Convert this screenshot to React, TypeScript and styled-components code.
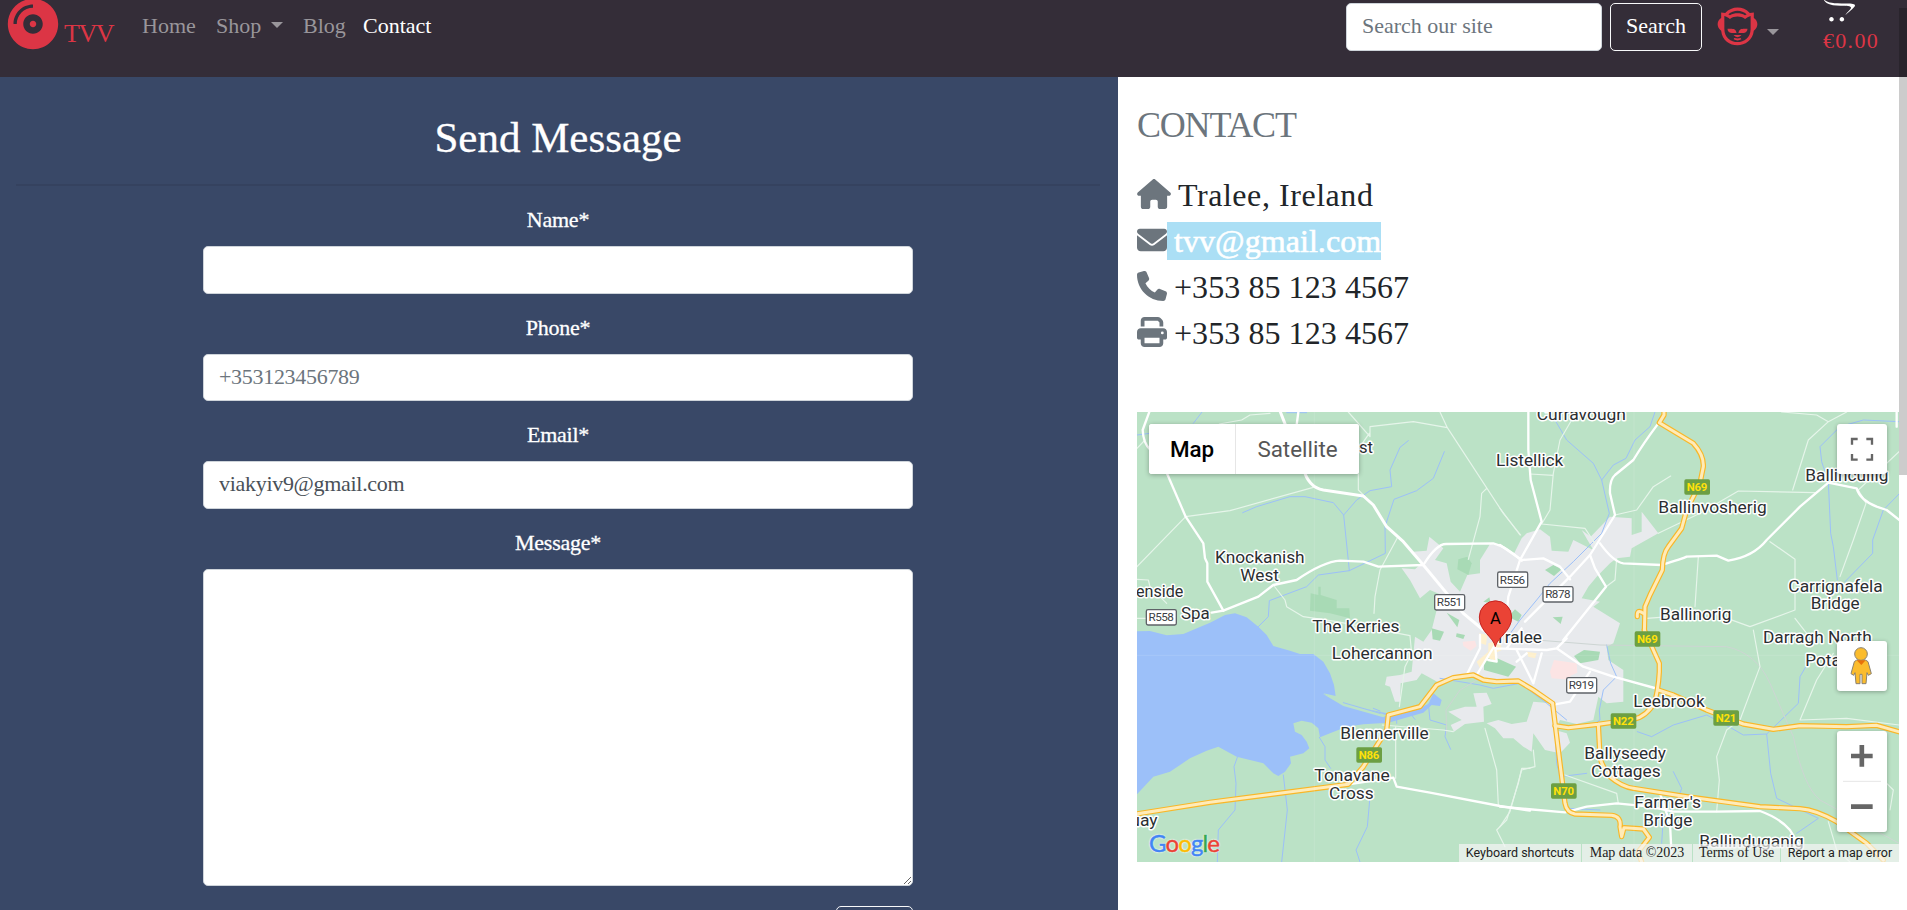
import React from 'react';
import styled, { createGlobalStyle } from 'styled-components';
import { FaCompactDisc, FaNapster, FaOpencart } from 'react-icons/fa';
import { FaHouse, FaEnvelope, FaPhone, FaPrint } from 'react-icons/fa6';

const GlobalStyle = createGlobalStyle`
  * { box-sizing: border-box; }
  body {
    margin: 0;
    height: 910px;
    overflow: hidden;
    background: #fff;
    color: #212529;
    font-family: 'Liberation Serif', serif;
    font-size: 22px;
  }
  input, textarea, button { font: inherit; }
`;

const Page = styled.div`
  height: 910px;
  overflow: hidden;
  position: relative;
`;

/* ---------- navigation ---------- */

const NavBar = styled.nav`
  height: 77px;
  background: #342d38;
  display: flex;
  align-items: flex-start;
  overflow: hidden;
`;

const Brand = styled.a`
  display: flex;
  width: 142px;
  padding-left: 7px;
  color: #dc3545;
  svg { width: 52px; height: 52px; margin-top: -2px; flex: none; }
`;

const BrandName = styled.span`
  margin: 19px 0 0 5px;
  font-size: 26px;
  line-height: 30px;
  letter-spacing: -1.5px;
`;

const NavLink = styled.a<{ $width: number; $active?: boolean }>`
  width: ${(p) => p.$width}px;
  color: ${(p) => (p.$active ? '#fff' : '#99969b')};
  line-height: 24px;
  margin-top: 14px;
  white-space: nowrap;
`;

const Caret = styled.span`
  display: block;
  width: 12px;
  height: 6px;
  border: 6px solid transparent;
  border-top-color: #99969b;
  border-bottom: 0;
  flex: none;
`;

const CaretLink = styled.a`
  width: 32px;
  padding-top: 22px;
`;

const SearchForm = styled.form`
  display: flex;
  gap: 8px;
  margin: 3px 0 0 auto;
`;

const SearchInput = styled.input`
  width: 256px;
  height: 48px;
  border: 1px solid #ced4da;
  border-radius: 5px;
  padding: 0 15px 2px;
  &::placeholder { color: #6c757d; opacity: 1; }
`;

const SearchButton = styled.button`
  width: 92px;
  height: 48px;
  padding: 0 0 2px;
  border: 1px solid #f8f9fa;
  border-radius: 5px;
  background: transparent;
  color: #fff;
`;

const Profile = styled.a`
  display: flex;
  width: 121px;
  padding: 5px 0 0 15px;
  color: #dc3545;
  svg { width: 41px; height: 41px; flex: none; }
  ${Caret} { margin: 24px 0 0 9px; }
`;

const Cart = styled.a`
  width: 84px;
  display: flex;
  flex-direction: column;
  color: #fff;
  svg { width: 32px; height: 26px; margin: -3px 0 7px; display: block; }
`;

const CartTotal = styled.span`
  color: #dc3545;
  line-height: 22px;
  letter-spacing: 1.3px;
`;

/* ---------- message form ---------- */

const Columns = styled.main`
  display: flex;
  height: 833px;
`;

const MessagePanel = styled.section`
  width: 1118px;
  padding: 32px 18px 0 16px;
  background: #394867;
  color: #fff;
`;

const Title = styled.h2`
  margin: 0;
  font-size: 43px;
  font-weight: 400;
  line-height: 58px;
  text-align: center;
  -webkit-text-stroke: 0.3px #fff;
`;

const Rule = styled.hr`
  margin: 17px 0 21px;
  border: 0;
  border-top: 2px solid #35425f;
`;

const Fields = styled.form`
  width: 710px;
  margin-left: 187px;
  display: flex;
  flex-direction: column;
`;

const Label = styled.label`
  height: 39px;
  line-height: 25px;
  text-align: center;
  letter-spacing: -0.25px;
  -webkit-text-stroke: 0.3px #fff;
`;

const Input = styled.input`
  height: 47.7px;
  margin-bottom: 21px;
  border: 1px solid #ced4da;
  border-radius: 5px;
  padding: 0 15px 2px;
  color: #495057;
  background: #fff;
  letter-spacing: -0.3px;
  &::placeholder { color: #6c757d; opacity: 1; }
`;

const TextArea = styled.textarea`
  height: 317px;
  border: 1px solid #ced4da;
  border-radius: 5px;
  resize: vertical;
  background: #fff;
`;

const SendButton = styled.button`
  align-self: flex-end;
  width: 77px;
  height: 48px;
  margin-top: 20px;
  border: 1px solid #f8f9fa;
  border-radius: 5px;
  background: transparent;
  color: #fff;
`;

/* ---------- contact details ---------- */

const ContactPanel = styled.section`
  flex: 1;
  padding: 27px 8px 0 19px;
  background: #fff;
`;

const ContactHeading = styled.h3`
  margin: 0 0 29px;
  color: #6c757d;
  font-size: 36px;
  font-weight: 400;
  line-height: 43px;
  letter-spacing: -1.2px;
`;

const ContactList = styled.ul`
  list-style: none;
  margin: 0 0 52px;
  padding: 0;
`;

const ContactItem = styled.li`
  display: flex;
  align-items: center;
  height: 46px;
  font-size: 32px;
  line-height: 38px;
  svg { height: 30px; width: 30px; color: #6c757d; flex: none; margin-bottom: 10px; }
  &:first-child svg { width: 34px; }
`;

const ContactText = styled.span<{ $selected?: boolean; $spacing?: number }>`
  height: 38px;
  margin-bottom: 8px;
  padding-left: 7px;
  letter-spacing: ${(p) => p.$spacing ?? 0.07}px;
  color: ${(p) => (p.$selected ? '#fff' : '#212529')};
  background: ${(p) => (p.$selected ? '#abdff5' : 'transparent')};
  -webkit-text-stroke: ${(p) => (p.$selected ? '0.6px #fff' : '0')};
`;

/* ---------- map ---------- */

const MapFrame = styled.div`
  position: relative;
  width: 762px;
  height: 450px;
  overflow: hidden;
  background: #bbe2c6;
  font-family: Roboto, sans-serif;
`;

const MapCanvas = styled.svg`
  display: block;
`;

const MapTypes = styled.div`
  position: absolute;
  left: 12px;
  top: 12px;
  display: flex;
  height: 50px;
  border-radius: 3px;
  background: #fff;
  box-shadow: 0 1px 5px rgba(0, 0, 0, 0.3);
  overflow: hidden;
`;

const MapType = styled.button<{ $width: number; $active?: boolean }>`
  width: ${(p) => p.$width}px;
  padding: 0 0 1px;
  border: 0;
  background: #fff;
  font-size: 22.4px;
  font-weight: ${(p) => (p.$active ? 500 : 400)};
  color: ${(p) => (p.$active ? '#000' : '#565656')};
  & + & { border-left: 1px solid #e6e6e6; }
`;

const MapControl = styled.button<{ $top: number; $height?: number }>`
  position: absolute;
  right: 12px;
  top: ${(p) => p.$top}px;
  width: 50px;
  height: ${(p) => p.$height ?? 50}px;
  padding: 0;
  border: 0;
  border-radius: 3px;
  background: #fff;
  box-shadow: 0 1px 4px rgba(0, 0, 0, 0.3);
  svg { display: block; }
`;

const GoogleMark = styled.div`
  position: absolute;
  left: 12px;
  bottom: 3px;
  font-family: Lato, sans-serif;
  font-size: 24px;
  line-height: 32px;
  letter-spacing: -0.9px;
  -webkit-text-stroke: 0.5px currentColor;
  text-shadow: 0 0 2px #fff, 0 0 2px #fff;
`;

const Letter = styled.span<{ $color: string }>`
  color: ${(p) => p.$color};
`;

const Attribution = styled.div`
  position: absolute;
  right: 0;
  bottom: 0;
  display: flex;
  gap: 1px;
  height: 18px;
  line-height: 17px;
  color: #222;
`;

const Credit = styled.span<{ $width: number; $serif?: boolean }>`
  width: ${(p) => p.$width}px;
  text-align: center;
  white-space: nowrap;
  background: rgba(245, 245, 245, 0.7);
  font-family: ${(p) => (p.$serif ? "'Liberation Serif', serif" : 'Roboto, sans-serif')};
  font-size: ${(p) => (p.$serif ? 14 : 12.5)}px;
`;

const ScrollThumb = styled.div`
  position: absolute;
  right: 0;
  top: 8px;
  width: 8px;
  height: 467px;
  background: rgba(0, 0, 0, 0.2);
`;

/* Map geometry is stored per tile; each tile has its own origin in the 2286x1350 canvas. */
const origins = {
  nw: [-21, -36],
  ne: [1089, -36],
  sw: [-21, 654],
  se: [1089, 654],
  town: [729, 324],
} as const;

type Tile = keyof typeof origins;
type Shape = [Tile, string];

const place = (tile: Tile) => `translate(${origins[tile][0]} ${origins[tile][1]})`;

const water: Shape[] = [
  ['sw', 'M0 4L60 3L110 16L160 12L240-22L285-45L315-50L350-38L385-10L410 15L430 48L480 62L510 72L550 72L580 95L600 130L612 165L617 198L580 190L640 225L700 235L770 250L860 238L895 222L910 190L935 210L930 228L905 225L880 248L775 278L700 283L650 290L600 310L570 322L565 295L545 278L515 272L490 280L495 305L515 315L530 335L538 355L520 370L480 380L483 400L465 425L445 438L430 430L400 400L360 390L320 380L265 350L230 362L180 385L120 425L70 440L0 515Z'],
];

const spit: Shape[] = [['sw', 'M578 191L640 214L770 256L760 262L640 228Z']];

const urban: Shape[] = [
  ['town', 'M65 145L105 148L125 130L100 95L140 92L148 50L190 85L165 120L200 130L212 185L240 215L262 165L300 160L300 120L330 72L375 80L400 105L425 55L440 40L480 28L510 50L515 92L565 95L580 60L640 90L605 30L632 50L690-10L755-5L755 45L785 35L785-25L835 40L755 85L750 110L710 115L690 130L650 170L625 200L605 235L660 245L640 260L720 310L700 370L680 380L685 420L730 450L730 545L680 550L655 530L640 600L590 612L540 600L525 630L560 640L570 668L540 700L495 690L460 640L455 695L430 680L400 655L370 655L345 625L320 610L355 600L395 612L440 605L445 590L460 545L515 550L460 500L415 480L345 485L250 465L180 490L125 460L110 480L62 490L60 545L45 545L30 500L15 495L20 470L60 465L95 455L105 350L130 365L155 330L170 270L200 232L150 210L120 235L90 180Z'],
  ['town', 'M205 575L255 560L290 560L280 520L320 518L335 552L310 560L312 605L255 612L222 635L212 615L245 600Z'],
];

const parks: Shape[] = [
  ['town', 'M235 118L262 110L275 130L265 165L232 148Z'],
  ['town', 'M495 150L520 135L545 148L522 168Z'],
  ['town', 'M385 290L405 268L425 285L415 305Z'],
  ['town', 'M310 245L328 232L332 250Z'],
  ['town', 'M518 292L548 290L542 312Z'],
  ['town', 'M155 325L192 335L180 362L158 358Z'],
  ['town', 'M200 278L238 300L232 322Z'],
  ['town', 'M230 340L255 345L250 357L228 350Z'],
  ['town', 'M312 415L345 412L408 440L385 470L312 450Z'],
  ['town', 'M582 408L612 390L660 395L655 420L600 430Z'],
  ['nw', 'M542 580L565 585L565 560L572 560L572 585L620 600L620 625L658 625L660 655L600 640L540 632Z'],
];

const commercial: Shape[] = [
  ['town', 'M325 370L360 360L365 390L345 400L350 425L325 415L300 445L290 425L325 395Z'],
  ['town', 'M298 340L322 345L318 375L298 368Z'],
  ['town', 'M440 395L470 400L465 415L445 410Z'],
];

const medical: Shape[] = [
  ['town', 'M510 455L522 420L590 430L592 458L570 468L580 480L515 475Z'],
  ['town', 'M248 365L285 362L290 378L272 392L250 378Z'],
];

const streams: Shape[] = [
  ['nw', 'M338 338L380 320L480 290L525 290L610 308L641 345L658 512L565 525L530 560L418 602L415 650L385 680'],
  ['nw', 'M835 122L810 142L780 210L785 260L720 272L680 300L641 345'],
  ['nw', 'M943 155L910 235L860 272L792 298L765 380L766 460L658 512'],
  ['nw', 'M216 36L190 70M21 105L60 100M470 38L530 38'],
  ['ne', 'M465 36L450 80L405 120L378 175L340 195L305 240L328 340L305 400L275 430L220 485L150 550L110 600L60 660L20 715'],
  ['ne', 'M165 60L200 120L280 190L305 240'],
  ['ne', 'M1197 65L1090 60L1020 80L960 140L965 185L985 245L992 400L1000 440L1012 540'],
  ['ne', 'M1197 282L1150 330L1118 420L1118 460L1035 545'],
  ['town', 'M680 375L692 430L710 470L670 510L658 570L660 600L630 620'],
  ['se', 'M412 305L455 320L520 285L620 255L690 292L730 315L800 312L812 430L830 505L955 565L890 610'],
  ['se', 'M800 312L895 220L900 140L935 80'],
  ['se', 'M165 290L170 400L180 440L260 430M520 425L545 475L530 520L490 560L485 640M200 535L300 540'],
  ['sw', 'M322 382L312 410L318 460L315 540L265 600L262 696M460 435L472 540L455 696M568 322L585 350L585 390L602 415M720 500L712 590L678 660L690 696'],
  ['sw', 'M895 222L900 270L950 285L945 320L962 358M800 280L800 255M840 250L855 268M640 218L750 250M730 235L750 243'],
  ['town', 'M180 475L300 495L340 505L420 490L500 550L560 600'],
];

const railways: Shape[] = [
  ['town', 'M200 640L198 570L240 510L290 480'],
  ['se', 'M110 30L300 45L680 50Q770 70 810 160L880 320Q910 470 960 510L1197 640'],
];

const lanes: Shape[] = [
  ['nw', 'M167 350L300 332L550 262M167 350L21 500M21 145L45 120M268 72L335 60L360 45L420 40M655 36L720 110L720 80L850 65L952 83M930 36L952 83L1120 340L1172 405M718 100L690 140M685 195L685 270L705 290M1070 265L1055 280L1050 350L1015 478M803 412L750 510L735 590L732 640M430 555L465 600L470 620L520 650L620 665L840 707M21 655L110 655M21 538L55 540L60 560L110 610'],
  ['ne', 'M215 60L180 120L160 220L150 330L125 372L255 385L285 430M90 222L160 226M345 345L410 330L460 260L512 228M475 400L600 340L715 273L945 278M878 270L925 120L985 65L950 45L845 36M1197 155L1075 270L1098 310L1060 420L1020 530M810 425L885 478L885 630L750 680L640 640L440 655M595 470L585 620M350 475L345 540L318 560M0 325L60 405M1040 36L985 65M885 655L920 700'],
  ['se', 'M760 0L780 110L720 270L680 300L650 380L658 450L650 545M1000 70L950 150L900 270L1040 265L1197 285M195 435L350 490L355 520M100 360L105 410L65 420L30 545L0 590M1160 460L1180 480L1170 540M985 575L1010 660L1050 696'],
  ['sw', 'M840 18L845 70L825 110L808 230M797 445L797 290M757 285L940 300L970 305M1065 295L1100 420L1105 525M1200 415L1175 415L1165 460L1130 570L1100 600L1125 650'],
];

const roads: Shape[] = [
  ['nw', 'M60 30L38 90Q40 130 60 148M100 195L167 350L220 430L225 475L232 490L232 545L280 632'],
  ['nw', 'M245 638L280 632L385 590L430 555L500 540Q580 485 630 482L700 485L745 500L880 495Q920 430 950 432L1090 430Q1130 440 1175 482'],
  ['nw', 'M505 36L500 75'],
  ['ne', 'M85 36L85 150L92 240L125 365L60 480L25 590L20 640'],
  ['ne', 'M475 70Q430 130 400 180L345 225Q328 240 330 280L345 345L270 465L210 530L75 665'],
  ['ne', 'M300 430Q340 485 370 490L485 495Q550 475 560 470L650 467L685 482Q760 470 800 420L900 320L985 248L1070 265Q1080 300 1130 320L1160 330L1200 362'],
  ['ne', 'M0 435L65 480L130 475L180 500L210 538M270 465L285 505L318 560L190 720M1190 30L1190 80'],
  ['town', 'M260 465L300 385L300 345M290 465L345 375L350 425L325 420M345 385L500 390L530 385L610 440L700 470L835 507M410 390L460 490L485 400M380 385L425 325M530 385L560 355M630 455L570 545L525 553M440 400L410 425'],
  ['sw', 'M655 463L790 443L800 470L900 488L1110 528L1200 542'],
  ['se', 'M0 530L195 547L260 530L350 520L450 530L520 545L650 545L780 543Q840 565 870 600L900 650M480 490L510 580L515 680'],
];

const trunk: Shape = ['nw', 'M448 28L480 110L520 205Q535 262 580 270L700 288L730 315L770 380L820 425L880 495L1000 640L1060 690'];

const highways: Shape[] = [
  ['ne', 'M492 20L492 45L478 68L580 130Q612 165 610 200L600 250L560 330L545 385L505 440Q488 460 487 510L450 585L435 620L433 700M430 640Q410 625 412 650'],
  ['se', 'M433 0L478 100Q480 150 465 215Q440 260 400 268L295 283L205 293L165 287'],
  ['se', 'M475 180L520 195L620 240L730 282L820 298L900 287L1040 290L1130 286L1200 306'],
  ['sw', 'M0 555L240 517L655 463L700 410L770 300L775 255L870 230L920 165L970 143L1030 135L1060 150L1100 155L1165 153L1210 180L1268 220'],
  ['se', 'M158 222L180 400L195 520Q200 548 225 552L335 556Q365 560 360 590L365 620L372 593L430 597L448 622L415 665L425 696'],
  ['se', 'M295 283L300 380Q305 410 330 440Q365 470 400 475L560 500L780 530L900 536Q950 540 1010 575L1100 640L1150 690'],
];

interface LayerProps {
  shapes: Shape[];
  fill?: string;
  stroke?: string;
  width?: number;
}

const Layer = ({ shapes, fill = 'none', stroke = 'none', width = 0 }: LayerProps) => (
  <g fill={fill} stroke={stroke} strokeWidth={width} strokeLinejoin="round" strokeLinecap="round">
    {shapes.map(([tile, d]) => (
      <path key={tile + d} transform={place(tile)} d={d} />
    ))}
  </g>
);

/* text, tile, left, baseline, width */
const places: [string, Tile, number, number, number][] = [
  ['Curravough', 'ne', 110, 59, 268],
  ['st', 'nw', 687, 158, 42],
  ['Listellick', 'ne', -12, 199, 202],
  ['Ballincuilig', 'ne', 916, 243, 249],
  ['Ballinvosherig', 'ne', 475, 338, 325],
  ['Knockanish', 'nw', 255, 489, 269],
  ['West', 'nw', 331, 542, 116],
  ['enside', 'nw', 18, 591, 142],
  ['Spa', 'nw', 153, 656, 86],
  ['The Kerries', 'nw', 547, 696, 261],
  ['Lohercannon', 'sw', 605, 87, 303],
  ['Carrignafela', 'ne', 865, 575, 283],
  ['Bridge', 'ne', 932, 628, 147],
  ['Ballinorig', 'ne', 480, 660, 214],
  ['Darragh North', 'se', 789, 38, 326],
  ['Potaley', 'se', 916, 107, 170],
  ['Tralee', 'se', -15, 38, 141],
  ['Leebrook', 'se', 400, 231, 214],
  ['Blennerville', 'sw', 631, 327, 265],
  ['Tonavane', 'sw', 553, 454, 226],
  ['Cross', 'sw', 597, 507, 134],
  ['Ballyseedy', 'se', 253, 388, 245],
  ['Cottages', 'se', 273, 441, 209],
  ["Farmer's", 'se', 403, 535, 200],
  ['Bridge', 'se', 430, 588, 147],
  ['Ballinduganig', 'se', 598, 652, 313],
  ['uay', 'sw', 1, 589, 82],
];

/* text, tile, left, top */
const shields: [string, Tile, number, number][] = [
  ['R558', 'nw', 48, 628],
  ['R551', 'nw', 913, 583],
  ['R556', 'nw', 1102, 515],
  ['R878', 'ne', 128, 559],
  ['R919', 'se', 199, 142],
  ['N69', 'ne', 552, 237],
  ['N69', 'se', 403, 3],
  ['N22', 'se', 331, 249],
  ['N21', 'se', 639, 240],
  ['N70', 'se', 152, 459],
  ['N86', 'sw', 678, 351],
];

const Shield = ({ code, tile, x, y }: { code: string; tile: Tile; x: number; y: number }) => {
  const national = code.startsWith('N');
  const w = national ? 78 : 91;
  return (
    <g transform={place(tile)}>
      <rect
        x={x + 1} y={y + 1} width={w - 1} height={46} rx={5}
        fill={national ? '#6c9f43' : '#fff'}
        stroke={national ? 'none' : '#5f6368'} strokeWidth={4}
      />
      <text
        x={x + w / 2} y={y + 36} textAnchor="middle"
        fontSize={national ? 34 : 35}
        fontWeight={national ? 700 : 400}
        textLength={national ? 62 : 76}
        fill={national ? '#ffe10a' : '#3c4043'}
      >
        {code}
      </text>
    </g>
  );
};

const TownMap = () => (
  <MapCanvas width="762" height="450" viewBox="0 0 2286 1350" fontFamily="Roboto, sans-serif">
    <rect width="2286" height="1350" fill="#bbe2c6" />
    <Layer shapes={water} fill="#9cc0f9" />
    <Layer shapes={spit} fill="#bbe2c6" />
    <Layer shapes={urban} fill="#e8eaed" />
    <Layer shapes={parks} fill="#a8dab5" />
    <Layer shapes={medical} fill="#fce4e4" />
    <Layer shapes={commercial} fill="#fef0cd" />
    <Layer shapes={streams} stroke="#9cc0f9" width={3} />
    <Layer shapes={railways} stroke="#cdd5d3" width={3} />
    <Layer shapes={lanes} stroke="#e6f5ea" width={3.5} />
    <Layer shapes={roads} stroke="#fff" width={7} />
    <Layer shapes={[trunk]} stroke="#fff" width={9} />
    <Layer shapes={highways} stroke="#f9b728" width={16} />
    <Layer shapes={highways} stroke="#ffebb8" width={9} />
    <path d="M532 0V1350M1491 0V1350M0 730H2286" stroke="#fff" strokeOpacity="0.12" strokeWidth="3" />
    {shields.map(([code, tile, x, y]) => (
      <Shield key={code + tile} code={code} tile={tile} x={x} y={y} />
    ))}
    <g fontSize="51.5" fill="#2b2e31" stroke="#fff" strokeWidth="9" strokeLinejoin="round">
      {places.map(([name, tile, x, y, length]) => (
        <text key={name + tile} transform={place(tile)} x={x} y={y} textLength={length} lengthAdjust="spacingAndGlyphs" paintOrder="stroke">
          {name}
        </text>
      ))}
    </g>
    <g transform={place('town')}>
      <path
        d="M346 380C340 350 298 335 298 291A48 48 0 0 1 395 291C395 335 352 350 346 380Z"
        fill="#ea4335" stroke="#c5221f" strokeWidth="3"
      />
      <text x="346" y="312" textAnchor="middle" fontSize="50" fill="#000">A</text>
    </g>
  </MapCanvas>
);

const Pegman = () => (
  <svg width="50" height="50" viewBox="0 0 150 150">
    <g fill="#fbbc2d" stroke="#8a8272" strokeWidth="3">
      <path d="M52 62Q55 56 72 56Q90 56 93 62L103 98L94 103L90 95L87 128H75V100H69V128H57L54 95L50 103L42 98Z" />
      <circle cx="72" cy="39" r="19" />
    </g>
    <path d="M59 58H86L73 72Z" fill="#e8710a" />
  </svg>
);

const letters: [string, string][] = [
  ['G', '#4285f4'], ['o', '#ea4335'], ['o', '#fbbc04'], ['g', '#4285f4'], ['l', '#34a853'], ['e', '#ea4335'],
];

const App = () => (
  <Page>
    <GlobalStyle />
    <NavBar>
      <Brand>
        <FaCompactDisc />
        <BrandName>TVV</BrandName>
      </Brand>
      <NavLink $width={74}>Home</NavLink>
      <NavLink $width={55}>Shop</NavLink>
      <CaretLink><Caret /></CaretLink>
      <NavLink $width={60}>Blog</NavLink>
      <NavLink $width={80} $active>Contact</NavLink>
      <SearchForm>
        <SearchInput placeholder="Search our site" />
        <SearchButton type="button">Search</SearchButton>
      </SearchForm>
      <Profile>
        <FaNapster />
        <Caret />
      </Profile>
      <Cart>
        <FaOpencart />
        <CartTotal>€0.00</CartTotal>
      </Cart>
    </NavBar>
    <Columns>
      <MessagePanel>
        <Title>Send Message</Title>
        <Rule />
        <Fields>
          <Label>Name*</Label>
          <Input />
          <Label>Phone*</Label>
          <Input placeholder="+353123456789" />
          <Label>Email*</Label>
          <Input defaultValue="viakyiv9@gmail.com" />
          <Label>Message*</Label>
          <TextArea />
          <SendButton type="button">Send</SendButton>
        </Fields>
      </MessagePanel>
      <ContactPanel>
        <ContactHeading>CONTACT</ContactHeading>
        <ContactList>
          <ContactItem><FaHouse /><ContactText $spacing={0.55}>Tralee, Ireland</ContactText></ContactItem>
          <ContactItem><FaEnvelope /><ContactText $selected>tvv@gmail.com</ContactText></ContactItem>
          <ContactItem><FaPhone /><ContactText>+353 85 123 4567</ContactText></ContactItem>
          <ContactItem><FaPrint /><ContactText>+353 85 123 4567</ContactText></ContactItem>
        </ContactList>
        <MapFrame>
          <TownMap />
          <MapTypes>
            <MapType $width={86} $active>Map</MapType>
            <MapType $width={124}>Satellite</MapType>
          </MapTypes>
          <MapControl $top={12}>
            <svg width="50" height="50" viewBox="0 0 150 150" fill="none" stroke="#666" strokeWidth="7">
              <path d="M45 62V45H62M88 45H105V62M105 90V107H88M62 107H45V90" />
            </svg>
          </MapControl>
          <MapControl $top={229}><Pegman /></MapControl>
          <MapControl $top={319} $height={101}>
            <svg width="50" height="101" viewBox="0 0 150 303" fill="none">
              <path d="M42 75H107M74.500 42V107M42 227H107" stroke="#666" strokeWidth="14" />
              <path d="M18 151H132" stroke="#e6e6e6" strokeWidth="3" />
            </svg>
          </MapControl>
          <GoogleMark>
            {letters.map(([char, color], i) => (
              <Letter key={i} $color={color}>{char}</Letter>
            ))}
          </GoogleMark>
          <Attribution>
            <Credit $width={122}>Keyboard shortcuts</Credit>
            <Credit $width={110} $serif>Map data ©2023</Credit>
            <Credit $width={87} $serif>Terms of Use</Credit>
            <Credit $width={118}>Report a map error</Credit>
          </Attribution>
        </MapFrame>
      </ContactPanel>
    </Columns>
    <ScrollThumb />
  </Page>
);

export default App;
